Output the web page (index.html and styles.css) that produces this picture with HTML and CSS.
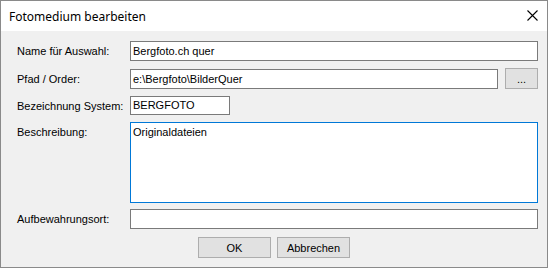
FILE: index.html
```html
<!DOCTYPE html>
<html>
    <head>
        <link rel="stylesheet" href="styles.css">
    </head>
    <body>
    <div class="window">
        <div class="titlebar">
            <span class="title">Fotomedium bearbeiten</span>
            <svg class="close" width="11" height="11" viewBox="0 0 11 11">
                <path d="M0.5 0.5 L10.5 10.5 M10.5 0.5 L0.5 10.5" stroke="#000" stroke-width="1.1" fill="none" />
            </svg>
        </div>
        <div class="content">
            <div class="form">
                <label class="label">Name für Auswahl:</label>
                <div class="field"><div class="textbox wide">Bergfoto.ch quer</div></div>

                <label class="label">Pfad / Order:</label>
                <div class="field">
                    <div class="textbox wide">e:\Bergfoto\BilderQuer</div>
                    <button class="button dots">...</button>
                </div>

                <label class="label">Bezeichnung System:</label>
                <div class="field"><div class="textbox short">BERGFOTO</div></div>

                <label class="label top">Beschreibung:</label>
                <div class="field"><div class="textarea">Originaldateien</div></div>

                <label class="label last">Aufbewahrungsort:</label>
                <div class="field last"><div class="textbox wide"></div></div>
            </div>
            <div class="buttons">
                <button class="button">OK</button>
                <button class="button">Abbrechen</button>
            </div>
        </div>
    </div>
    </body>
</html>
```
FILE: styles.css
```css
body {
    margin: 0;
    font-family: "Liberation Sans", Arial, sans-serif;
    font-size: 11px;
    color: #000;
}
.window {
    width: 548px;
    height: 268px;
    box-sizing: border-box;
    border: 1px solid #8a8a8a;
    display: flex;
    flex-direction: column;
}
.titlebar {
    height: 30px;
    background-color: #fff;
    display: flex;
    align-items: center;
    justify-content: space-between;
    padding-left: 8px;
    padding-right: 9px;
}
.title {
    font-family: "Noto Sans", sans-serif;
    font-size: 12px;
}
.close {
    margin-top: -1px;
}
.content {
    flex: 1;
    background-color: #f0f0f0;
    padding: 10px 9px 0 16px;
}
.form {
    display: grid;
    grid-template-columns: 113px 1fr;
    row-gap: 7px;
}
.label {
    display: flex;
    align-items: center;
}
.label.top {
    align-items: flex-start;
    padding-top: 4px;
}
.last {
    margin-top: -1px;
}
.field {
    display: flex;
    align-items: center;
}
.textbox {
    height: 20px;
    box-sizing: border-box;
    border: 1px solid #7a7a7a;
    background-color: #fff;
    padding-left: 2px;
    line-height: 18px;
}
.wide {
    flex: 1;
}
.short {
    width: 100px;
    height: 19px;
    line-height: 17px;
}
.textarea {
    flex: 1;
    height: 81px;
    box-sizing: border-box;
    border: 1px solid #0078d7;
    background-color: #fff;
    padding: 3px 2px;
}
.button {
    width: 73px;
    height: 21px;
    box-sizing: border-box;
    border: 1px solid #adadad;
    background-color: #e1e1e1;
    font-family: "Liberation Sans", Arial, sans-serif;
    font-size: 11px;
    color: #000;
    padding: 0;
}
.dots {
    width: 33px;
    margin-left: 7px;
}
.buttons {
    display: flex;
    justify-content: center;
    gap: 6px;
    margin-top: 8px;
    margin-left: -15px;
    margin-right: -8px;
}
```
